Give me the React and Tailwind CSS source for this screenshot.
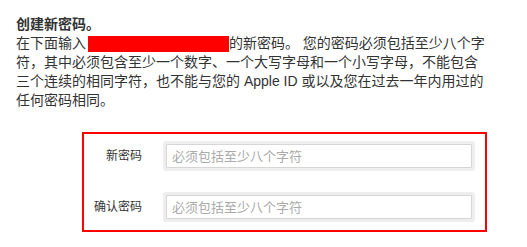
import React from "react";

const font = { fontFamily: '"Liberation Sans", "Noto Sans CJK SC", sans-serif' };

function Field({ label }) {
  return (
    <div className="flex items-center">
      <label className="w-[58px] shrink-0 text-right text-[12px] leading-[16px] text-[#333]">{label}</label>
      <input
        type="password"
        placeholder="必须包括至少八个字符"
        className="ml-[24px] h-[24px] w-[306px] rounded-[1px] border border-[#d6d6d6] bg-white px-[5px] text-[13px] text-[#333] shadow-[0_0_0_3px_#eeeeee] outline-none placeholder:text-[#aaaaaa]"
      />
    </div>
  );
}

export default function App() {
  return (
    <div className="h-[247px] w-[527px] bg-white pl-[16px] pt-[15px] text-[#333]" style={font}>
      <h2 className="text-[14px] font-bold leading-[19px] text-[#333]">创建新密码。</h2>
      <p className="w-[472px] text-[14px] leading-[19px]">
        在下面输入 <span className="-ml-[2px] inline-block h-[16px] w-[141px] bg-[#ff0000] align-[-4px]"></span>的新密码。 您的密码必须包括至少八个字符，其中必须包含至少一个数字、一个大写字母和一个小写字母，不能包含三个连续的相同字符，也不能与您的 Apple ID 或以及您在过去一年内用过的任何密码相同。
      </p>

      {/* form box */}
      <div className="ml-[66px] mt-[22px] flex h-[100px] w-[405px] flex-col gap-[27px] border-2 border-[#ff0000] pt-[10px]">
        <Field label="新密码" />
        <Field label="确认密码" />
      </div>
    </div>
  );
}
